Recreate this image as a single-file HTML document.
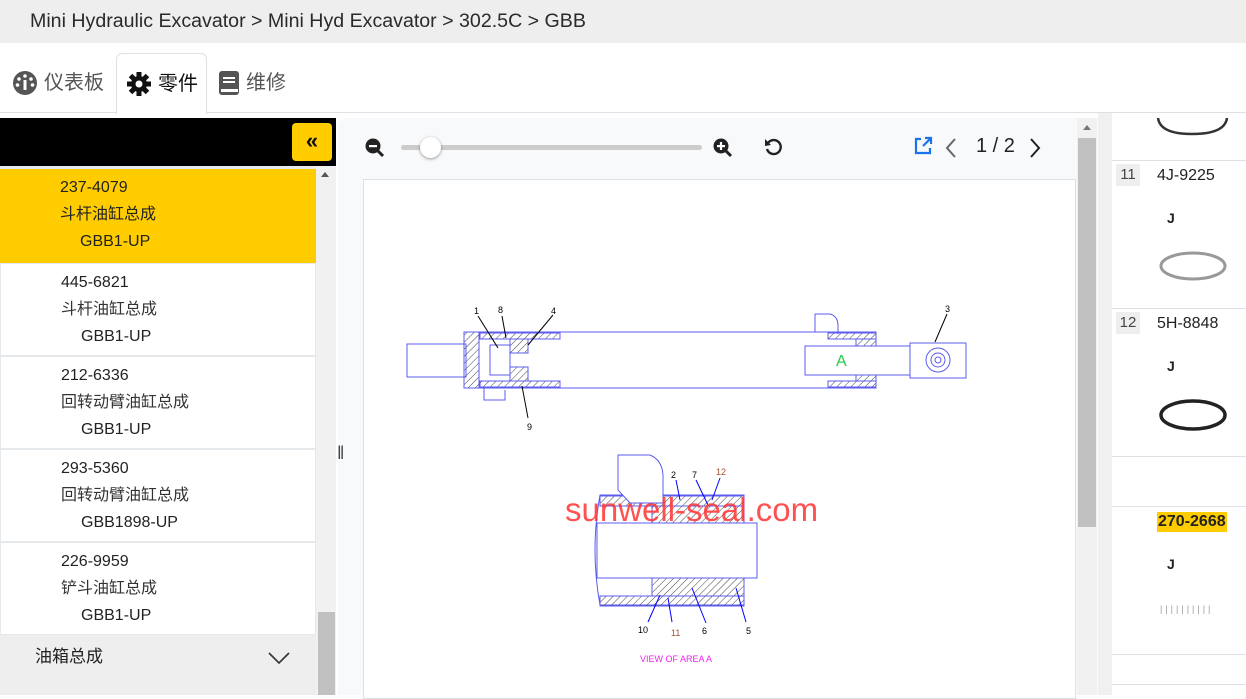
<!DOCTYPE html>
<html><head><meta charset="utf-8">
<style>
*{box-sizing:border-box;margin:0;padding:0}
body{width:1246px;height:695px;overflow:hidden;background:#fff;font-family:"Liberation Sans","Noto Sans CJK SC",sans-serif;color:#222;position:relative}
.abs{position:absolute}
.crumb{left:0;top:0;width:1246px;height:43px;background:#eeeeee;font-size:19.6px;line-height:43px;padding-left:30px;color:#2a2a2a}
.tabline{left:0;top:112px;width:1246px;height:1px;background:#dde1e5}
.tab{top:53px;height:60px;font-size:20px;line-height:58px;color:#555;display:flex;align-items:center}
.tab svg{margin-right:6px}
.active{left:116px;width:91px;border:1px solid #dde1e5;border-bottom:none;border-radius:6px 6px 0 0;background:#fff;padding-left:9px;color:#111;height:61px}
.black{left:0;top:118px;width:336px;height:48px;background:#000}
.ybtn{left:292px;top:123px;width:40px;height:38px;background:#ffcc00;border-radius:4px;font-size:22px;text-align:center;line-height:36px;color:#111;font-weight:bold}
.list{left:0;top:166px;width:316px;height:469px;background:#e6e9ec}
.item{position:absolute;left:1px;width:314px;height:91px;background:#fff;font-size:16px;color:#222}
.item div{position:absolute;left:60px;line-height:20px;height:20px}
.item .a{top:9px}.item .b{top:36px;color:#333}.item .c{top:63px;left:80px}
.sb{left:316px;top:166px;width:20px;height:529px;background:#f1f1f1}
.thumb{left:318px;top:612px;width:17px;height:83px;background:#c1c1c1}
.bottom{left:0;top:635px;width:316px;height:60px;background:#eeeeee;font-size:17px}
.center{left:338px;top:118px;width:760px;height:577px;background:#f8f9fa;border-radius:8px 0 0 0}
.box{left:363px;top:179px;width:713px;height:520px;background:#fff;border:1px solid #dde1e5}
.sb2{left:1077px;top:118px;width:20px;height:577px;background:#f1f1f1}
.thumb2{left:1078px;top:138px;width:18px;height:389px;background:#c1c1c1}
.gap{left:1098px;top:113px;width:14px;height:582px;background:#f0f0f0}
.rl{position:absolute;left:1112px;width:134px;height:1px;background:#dde1e5}
.rn{position:absolute;font-size:16px;color:#222;line-height:20px}
.num{position:absolute;left:1116px;width:24px;height:22px;background:#eee;font-size:15px;line-height:22px;text-align:center;color:#444}
.j{position:absolute;left:1167px;font-size:14px;font-weight:bold}
</style></head><body>
<div class="abs crumb">Mini Hydraulic Excavator &gt; Mini Hyd Excavator &gt; 302.5C &gt; GBB</div>
<div class="abs tabline"></div>
<div class="abs tab" style="left:12px">
<svg width="26" height="26" viewBox="0 0 26 26"><circle cx="13" cy="13" r="12" fill="#555"/><circle cx="13" cy="6" r="1.8" fill="#fff"/><circle cx="7" cy="9" r="1.8" fill="#fff"/><circle cx="19" cy="9" r="1.8" fill="#fff"/><circle cx="5.5" cy="15" r="1.8" fill="#fff"/><circle cx="20.5" cy="15" r="1.8" fill="#fff"/><rect x="11.5" y="10" width="3" height="10" fill="#fff"/></svg>仪表板</div>
<div class="abs tab active">
<svg width="26" height="26" viewBox="0 0 26 26"><g fill="#111"><circle cx="13" cy="13" r="8"/><g><rect x="10.5" y="1" width="5" height="6"/><rect x="10.5" y="19" width="5" height="6"/><rect x="1" y="10.5" width="6" height="5"/><rect x="19" y="10.5" width="6" height="5"/></g><g transform="rotate(45 13 13)"><rect x="10.5" y="1" width="5" height="6"/><rect x="10.5" y="19" width="5" height="6"/><rect x="1" y="10.5" width="6" height="5"/><rect x="19" y="10.5" width="6" height="5"/></g></g><circle cx="13" cy="13" r="3.5" fill="#fff"/></svg>零件</div>
<div class="abs tab" style="left:218px">
<svg width="22" height="26" viewBox="0 0 22 26"><rect x="1" y="1" width="20" height="24" rx="3" fill="#555"/><rect x="5" y="7" width="12" height="2" fill="#fff"/><rect x="5" y="11" width="12" height="2" fill="#fff"/><rect x="3" y="19" width="17" height="3" fill="#fff"/></svg>维修</div>

<div class="abs black"></div>
<div class="abs ybtn">«</div>
<div class="abs list">
<div class="item" style="top:3px;background:#ffcc00;left:0;width:316px;height:94px"><div class="a">237-4079</div><div class="b" style="color:#222">斗杆油缸总成</div><div class="c">GBB1-UP</div></div>
<div class="item" style="top:98px"><div class="a">445-6821</div><div class="b">斗杆油缸总成</div><div class="c">GBB1-UP</div></div>
<div class="item" style="top:191px"><div class="a">212-6336</div><div class="b">回转动臂油缸总成</div><div class="c">GBB1-UP</div></div>
<div class="item" style="top:284px"><div class="a">293-5360</div><div class="b">回转动臂油缸总成</div><div class="c">GBB1898-UP</div></div>
<div class="item" style="top:377px"><div class="a">226-9959</div><div class="b">铲斗油缸总成</div><div class="c">GBB1-UP</div></div>
</div>
<div class="abs sb"></div>
<div class="abs" style="left:321px;top:172px;width:0;height:0;border:4px solid transparent;border-bottom:5px solid #555;border-top:none"></div>
<div class="abs thumb"></div>
<div class="abs bottom"><span class="abs" style="left:35px;top:11px;line-height:22px">油箱总成</span>
<svg class="abs" style="left:268px;top:16px" width="22" height="14" viewBox="0 0 22 14"><path d="M1 2 L11 12 L21 2" stroke="#333" stroke-width="1.6" fill="none"/></svg></div>

<div class="abs center"></div>
<div class="abs" style="left:337px;top:443px;font-size:18px;color:#444">‖</div>
<div class="abs box"></div>
<svg class="abs" style="left:364px;top:137px" width="24" height="22" viewBox="0 0 24 22"><circle cx="9" cy="9" r="7.5" fill="#222"/><rect x="5" y="8" width="8" height="2.2" fill="#fff"/><path d="M14 14 L19 19" stroke="#222" stroke-width="3"/></svg>
<div class="abs" style="left:401px;top:145px;width:301px;height:5px;background:#ccc;border-radius:3px"></div>
<div class="abs" style="left:420px;top:137px;width:21px;height:21px;background:#fff;border-radius:50%;box-shadow:0 1px 3px rgba(0,0,0,.4)"></div>
<svg class="abs" style="left:712px;top:137px" width="24" height="22" viewBox="0 0 24 22"><circle cx="9" cy="9" r="7.5" fill="#222"/><rect x="5" y="8" width="8" height="2.2" fill="#fff"/><rect x="7.9" y="5" width="2.2" height="8" fill="#fff"/><path d="M14 14 L19 19" stroke="#222" stroke-width="3"/></svg>
<svg class="abs" style="left:763px;top:137px" width="20" height="20" viewBox="0 0 20 20"><path d="M5 6 A7 7 0 1 1 4 12" stroke="#222" stroke-width="2.4" fill="none"/><path d="M2 2 L2 9 L8 8 Z" fill="#222"/></svg>
<svg class="abs" style="left:913px;top:136px" width="20" height="20" viewBox="0 0 20 20"><path d="M8 3 H3 V17 H17 V12" stroke="#1a73e8" stroke-width="2.2" fill="none"/><path d="M10 10 L17 3 M12 2 H18 V8" stroke="#1a73e8" stroke-width="2.2" fill="none"/></svg>
<svg class="abs" style="left:944px;top:138px" width="14" height="20" viewBox="0 0 14 20"><path d="M11 1 L3 10 L11 19" stroke="#666" stroke-width="2" fill="none"/></svg>
<div class="abs" style="left:976px;top:135px;font-size:20px;color:#222">1 / 2</div>
<svg class="abs" style="left:1028px;top:138px" width="14" height="20" viewBox="0 0 14 20"><path d="M3 1 L11 10 L3 19" stroke="#222" stroke-width="2" fill="none"/></svg>

<svg class="abs" style="left:363px;top:179px" width="713" height="516" viewBox="363 179 713 516" font-family="Liberation Sans,sans-serif">
<defs><pattern id="h" width="5" height="5" patternUnits="userSpaceOnUse" patternTransform="rotate(45)"><line x1="0" y1="0" x2="0" y2="5" stroke="#444" stroke-width="1"/></pattern></defs>
<g stroke="#5b5bf0" fill="none" stroke-width="1">
<path d="M407 344 H466 V377 H407 Z"/>
<rect x="464" y="332" width="412" height="56"/>
<rect x="464" y="332" width="15" height="56" fill="url(#h)"/>
<rect x="480" y="333" width="80" height="6" fill="url(#h)"/>
<rect x="480" y="381" width="80" height="6" fill="url(#h)"/>
<rect x="490" y="345" width="20" height="30"/>
<rect x="510" y="339" width="18" height="14" fill="url(#h)"/>
<rect x="510" y="367" width="18" height="14" fill="url(#h)"/>
<rect x="828" y="333" width="48" height="6" fill="url(#h)"/>
<rect x="828" y="381" width="48" height="6" fill="url(#h)"/>
<rect x="856" y="339" width="20" height="10" fill="url(#h)"/>
<rect x="856" y="371" width="20" height="10" fill="url(#h)"/>
<rect x="805" y="346" width="105" height="29" fill="#fff"/>
<rect x="910" y="343" width="56" height="35"/>
<circle cx="938" cy="360" r="12"/><circle cx="938" cy="360" r="7"/><circle cx="938" cy="360" r="3"/>
<path d="M815 332 V314 H830 Q838 316 838 326 V334"/>
<path d="M484 388 V400 H505 V390"/>
<path d="M600 495 H744 V605 H600 Q590 550 600 495 Z"/>
<rect x="600" y="496" width="144" height="10" fill="url(#h)"/>
<rect x="600" y="596" width="144" height="10" fill="url(#h)"/>
<rect x="652" y="506" width="92" height="17" fill="url(#h)"/>
<rect x="652" y="578" width="92" height="18" fill="url(#h)"/>
<rect x="597" y="523" width="160" height="55" fill="#fff"/>
<path d="M618 455 H650 Q662 460 663 475 V503 H630 L618 490 Z" fill="#fff"/>
</g>
<g stroke="#000" stroke-width="1"><line x1="478" y1="316" x2="498" y2="348"/><line x1="502" y1="316" x2="506" y2="338"/><line x1="553" y1="315" x2="528" y2="345"/><line x1="522" y1="386" x2="528" y2="418"/><line x1="947" y1="314" x2="935" y2="342"/></g>
<g stroke="#00f" stroke-width="1"><line x1="676" y1="480" x2="680" y2="500"/><line x1="696" y1="480" x2="708" y2="505"/><line x1="720" y1="478" x2="712" y2="500"/><line x1="648" y1="622" x2="660" y2="595"/><line x1="672" y1="622" x2="668" y2="598"/><line x1="706" y1="623" x2="692" y2="588"/><line x1="746" y1="622" x2="736" y2="588"/></g>
<g font-size="9" fill="#000"><text x="474" y="314">1</text><text x="498" y="313">8</text><text x="551" y="314">4</text><text x="527" y="430">9</text><text x="945" y="312">3</text>
<text x="671" y="478">2</text><text x="692" y="478">7</text><text x="716" y="475" fill="#a0522d">12</text><text x="638" y="633">10</text><text x="671" y="636" fill="#a0522d">11</text><text x="702" y="634">6</text><text x="746" y="634">5</text></g>
<text x="836" y="366" font-size="16" fill="#22cc44">A</text>
<text x="640" y="662" font-size="9" fill="#ee22ee">VIEW OF AREA A</text>
<text x="565" y="521" font-size="33" fill="#ff3333" opacity="0.85">sunwell-seal.com</text>
</svg>

<div class="abs sb2"></div>
<div class="abs" style="left:1083px;top:125px;width:0;height:0;border:4px solid transparent;border-bottom:5px solid #777;border-top:none"></div>
<div class="abs thumb2"></div>
<div class="abs gap"></div>

<svg class="abs" style="left:1155px;top:113px" width="75" height="25" viewBox="0 0 75 25"><path d="M3 5 Q5 21 37 21 Q70 21 72 5" stroke="#333" stroke-width="2.5" fill="none"/></svg>
<div class="rl" style="top:160px"></div>
<div class="num" style="top:164px">11</div><div class="rn" style="left:1157px;top:166px">4J-9225</div>
<div class="j" style="top:210px">J</div>
<svg class="abs" style="left:1158px;top:249px" width="70" height="34" viewBox="0 0 70 34"><ellipse cx="35" cy="17" rx="32" ry="13" stroke="#999" stroke-width="3" fill="none"/></svg>
<div class="rl" style="top:308px"></div>
<div class="num" style="top:312px">12</div><div class="rn" style="left:1157px;top:314px">5H-8848</div>
<div class="j" style="top:358px">J</div>
<svg class="abs" style="left:1158px;top:396px" width="70" height="38" viewBox="0 0 70 38"><ellipse cx="35" cy="19" rx="32" ry="14" stroke="#222" stroke-width="3.5" fill="none"/></svg>
<div class="rl" style="top:456px"></div>
<div class="rl" style="top:506px"></div>
<div class="rn" style="left:1157px;top:512px;background:#ffcc00;font-weight:bold;padding:0 1px">270-2668</div>
<div class="j" style="top:556px">J</div>
<div class="abs" style="left:1160px;top:604px;font-size:9px;color:#999;letter-spacing:3px">||||||||||</div>
<div class="rl" style="top:654px"></div>
<div class="rl" style="top:684px"></div>
</body></html>
